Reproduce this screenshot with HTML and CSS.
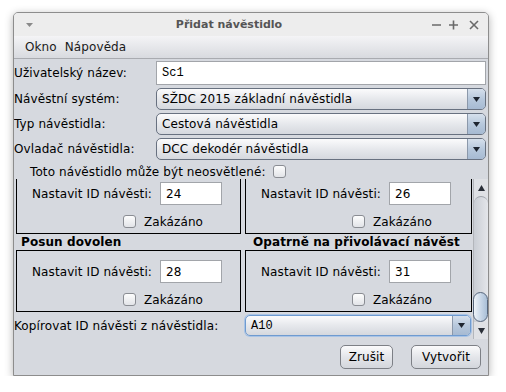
FILE: index.html
```html
<!DOCTYPE html>
<html lang="cs">
<head>
    <meta charset="UTF-8">
    <meta name="viewport" content="width=device-width, initial-scale=1.0">
    <title>Přidat návěstidlo</title>
    <link rel="stylesheet" href="styles.css">
</head>
<body>
    <div class="window">
        <div class="titlebar">
            <span class="win-menu">
                <svg width="7" height="4" viewBox="0 0 7 4"><polygon points="0,0 7,0 3.5,4" fill="#8a8a8a"/></svg>
            </span>
            <span class="title">Přidat návěstidlo</span>
            <span class="win-controls">
                <svg width="56" height="12" viewBox="0 0 56 12">
                    <line x1="0" y1="6" x2="9" y2="6" stroke="#6a6a6a" stroke-width="1.6"/>
                    <line x1="17" y1="6" x2="26" y2="6" stroke="#6a6a6a" stroke-width="1.6"/>
                    <line x1="21.5" y1="1.5" x2="21.5" y2="10.5" stroke="#6a6a6a" stroke-width="1.6"/>
                    <line x1="38" y1="2" x2="46" y2="10" stroke="#6a6a6a" stroke-width="1.6"/>
                    <line x1="46" y1="2" x2="38" y2="10" stroke="#6a6a6a" stroke-width="1.6"/>
                </svg>
            </span>
        </div>
        <div class="menubar">
            <span>Okno</span>
            <span>Nápověda</span>
        </div>
        <div class="content">
            <div class="form">
                <label>Uživatelský název:</label>
                <div class="textfield mono">Sc1</div>
                <label>Návěstní systém:</label>
                <div class="combo"><span class="combo-text">SŽDC 2015 základní návěstidla</span><span class="combo-arrow"><svg width="7" height="5" viewBox="0 0 7 5"><polygon points="0,0 7,0 3.5,5" fill="#1e2530"/></svg></span></div>
                <label>Typ návěstidla:</label>
                <div class="combo"><span class="combo-text">Cestová návěstidla</span><span class="combo-arrow"><svg width="7" height="5" viewBox="0 0 7 5"><polygon points="0,0 7,0 3.5,5" fill="#1e2530"/></svg></span></div>
                <label>Ovladač návěstidla:</label>
                <div class="combo"><span class="combo-text">DCC dekodér návěstidla</span><span class="combo-arrow"><svg width="7" height="5" viewBox="0 0 7 5"><polygon points="0,0 7,0 3.5,5" fill="#1e2530"/></svg></span></div>
            </div>

            <div class="lit-row">
                <span>Toto návěstidlo může být neosvětlené:</span>
                <span class="checkbox"></span>
            </div>

            <div class="scrollpane">
                <div class="viewport">
                    <!-- obsah je odscrollovaný o 7px -->
                    <div class="scrolled">
                        <div class="aspects">
                            <div class="aspect">
                                <div class="aspect-field">
                                    <span>Nastavit ID návěsti:</span>
                                    <div class="textfield small">24</div>
                                </div>
                                <div class="aspect-check"><span class="checkbox"></span>Zakázáno</div>
                            </div>
                            <div class="aspect">
                                <div class="aspect-field">
                                    <span>Nastavit ID návěsti:</span>
                                    <div class="textfield small">26</div>
                                </div>
                                <div class="aspect-check"><span class="checkbox"></span>Zakázáno</div>
                            </div>
                            <div class="aspect-title">Posun dovolen</div>
                            <div class="aspect-title right">Opatrně na přivolávací návěst</div>
                            <div class="aspect">
                                <div class="aspect-field">
                                    <span>Nastavit ID návěsti:</span>
                                    <div class="textfield small">28</div>
                                </div>
                                <div class="aspect-check"><span class="checkbox"></span>Zakázáno</div>
                            </div>
                            <div class="aspect">
                                <div class="aspect-field">
                                    <span>Nastavit ID návěsti:</span>
                                    <div class="textfield small">31</div>
                                </div>
                                <div class="aspect-check"><span class="checkbox"></span>Zakázáno</div>
                            </div>
                        </div>
                        <div class="copy-row">
                            <label>Kopírovat ID návěsti z návěstidla:</label>
                            <div class="combo focused"><span class="combo-text mono">A10</span><span class="combo-arrow"><svg width="7" height="5" viewBox="0 0 7 5"><polygon points="0,0 7,0 3.5,5" fill="#1e2530"/></svg></span></div>
                        </div>
                    </div>
                </div>
                <div class="scrollbar">
                    <div class="sb-button">
                        <svg width="7" height="6" viewBox="0 0 7 6"><polygon points="0,6 7,6 3.5,0" fill="#2a2f38"/></svg>
                    </div>
                    <div class="sb-track">
                        <div class="sb-thumb"></div>
                    </div>
                    <div class="sb-button">
                        <svg width="7" height="6" viewBox="0 0 7 6"><polygon points="0,0 7,0 3.5,6" fill="#2a2f38"/></svg>
                    </div>
                </div>
            </div>

            <div class="buttons">
                <button class="btn cancel">Zrušit</button>
                <button class="btn create">Vytvořit</button>
            </div>
        </div>
    </div>
</body>
</html>
```

FILE: styles.css
```css
body {
    margin: 0;
    background: #fff;
    font-family: "DejaVu Sans", sans-serif;
    font-size: 12px;
    letter-spacing: 0.1px;
    color: #000;
}
.window {
    width: 476px;
    height: 364px;
    box-sizing: border-box;
    margin: 12px 0 0 13px;
    border: 1px solid #8d8d8d;
    border-radius: 5px 5px 0 0;
    background: #d6d9df;
    box-shadow: 0 2px 8px rgba(0, 0, 0, 0.3);
    display: flex;
    flex-direction: column;
    overflow: hidden;
}
.titlebar {
    height: 23px;
    flex: none;
    display: flex;
    align-items: center;
    background: #ededed;
}
.win-menu {
    width: 30px;
    display: flex;
    justify-content: center;
    padding-top: 1px;
}
.title {
    flex: 1;
    text-align: center;
    padding-right: 18px;
    font-size: 11px;
    font-weight: bold;
    letter-spacing: 0;
    color: #555;
}
.win-controls {
    width: 56px;
    display: flex;
    padding-top: 1px;
}
.menubar {
    height: 23px;
    flex: none;
    box-sizing: border-box;
    border-bottom: 1px solid #a9abb0;
    background: linear-gradient(#f4f4f6, #d8dadf);
    display: flex;
    align-items: center;
    gap: 8px;
    padding-left: 11px;
    color: #1a1a1a;
}
.content {
    flex: 1;
    display: flex;
    flex-direction: column;
}
.mono {
    font-family: "Liberation Mono", monospace;
    letter-spacing: 0;
}
.form {
    display: grid;
    grid-template-columns: 142px 330px;
    grid-template-rows: 24px 22px 22px 22px;
    row-gap: 3px;
    padding-top: 2px;
}
.form label {
    display: flex;
    align-items: center;
}
.textfield {
    box-sizing: border-box;
    background: #fff;
    border: 1px solid #a2a5aa;
    display: flex;
    align-items: center;
    padding-left: 5px;
}
.textfield.small {
    width: 62px;
    height: 23px;
}
.combo {
    box-sizing: border-box;
    display: flex;
    border: 1px solid #687180;
    border-radius: 5px;
    background: linear-gradient(#fbfbfc, #e6e8ec 50%, #d5d8de);
    overflow: hidden;
}
.combo.focused {
    border-color: #6f9bd0;
    box-shadow: 0 0 0 1px #a9c4e6;
}
.combo-text {
    flex: 1;
    display: flex;
    align-items: center;
    padding-left: 5px;
}
.combo-arrow {
    width: 17px;
    border-left: 1px solid #8b98aa;
    background: linear-gradient(#d6e0ec, #b7c8dc 50%, #a6bad2);
    display: flex;
    align-items: center;
    justify-content: center;
}
.checkbox {
    display: inline-block;
    width: 11px;
    height: 11px;
    border: 1px solid #8a8d93;
    border-radius: 3px;
    background: linear-gradient(#fdfdfd, #e2e4e8);
}
.lit-row {
    height: 19px;
    box-sizing: border-box;
    padding: 4px 0 0 16px;
    display: flex;
    align-items: center;
    gap: 7px;
}
.scrollpane {
    height: 160px;
    flex: none;
    display: flex;
}
.viewport {
    width: 459px;
    overflow: hidden;
}
.scrolled {
    margin-top: -7px;
}
.aspects {
    display: grid;
    grid-template-columns: 225px 227px;
    column-gap: 4px;
    margin-left: 2px;
}
.aspect {
    height: 62px;
    box-sizing: border-box;
    border: 1px solid #000;
    padding: 9px 0 0 15px;
}
.aspect-field {
    display: grid;
    grid-template-columns: 128px 62px;
    align-items: center;
}
.aspect-check {
    display: flex;
    align-items: center;
    gap: 8px;
    height: 13px;
    margin: 10px 0 0 91px;
}
.aspect-title {
    height: 16px;
    line-height: 16px;
    font-weight: bold;
    padding-left: 5px;
}
.aspect-title.right {
    padding-left: 8px;
}
.copy-row {
    display: grid;
    grid-template-columns: 231px 226px;
    grid-template-rows: 21px;
    margin-top: 3px;
}
.copy-row label {
    display: flex;
    align-items: center;
}
.scrollbar {
    width: 15px;
    box-sizing: border-box;
    border-left: 1px solid #b3b6bb;
    background: #dfe1e5;
    display: flex;
    flex-direction: column;
}
.sb-button {
    height: 17px;
    flex: none;
    display: flex;
    align-items: center;
    justify-content: center;
}
.sb-track {
    flex: 1;
    display: flex;
    flex-direction: column;
    justify-content: flex-end;
    border-top: 1px solid #9ea3aa;
    border-radius: 7px 7px 0 0;
    background: linear-gradient(90deg, #c9cdd4, #e4e6ea);
}
.sb-thumb {
    height: 30px;
    box-sizing: border-box;
    border: 1px solid #56667c;
    border-radius: 8px;
    background: linear-gradient(90deg, #eef3f8, #c3d3e5 60%, #a9bfd7);
    margin-left: -1px;
}
.buttons {
    flex: 1;
    display: flex;
    justify-content: flex-end;
    align-items: flex-start;
    gap: 18px;
    padding: 6px 7px 0 0;
}
.btn {
    height: 24px;
    box-sizing: border-box;
    border: 1px solid #7d8086;
    border-radius: 5px;
    background: linear-gradient(#fbfbfc, #e4e6ea 50%, #d3d6dc);
    font-family: "DejaVu Sans", sans-serif;
    font-size: 12px;
    letter-spacing: 0.1px;
    color: #000;
    padding: 0;
}
.btn.cancel {
    width: 53px;
}
.btn.create {
    width: 70px;
}
```
